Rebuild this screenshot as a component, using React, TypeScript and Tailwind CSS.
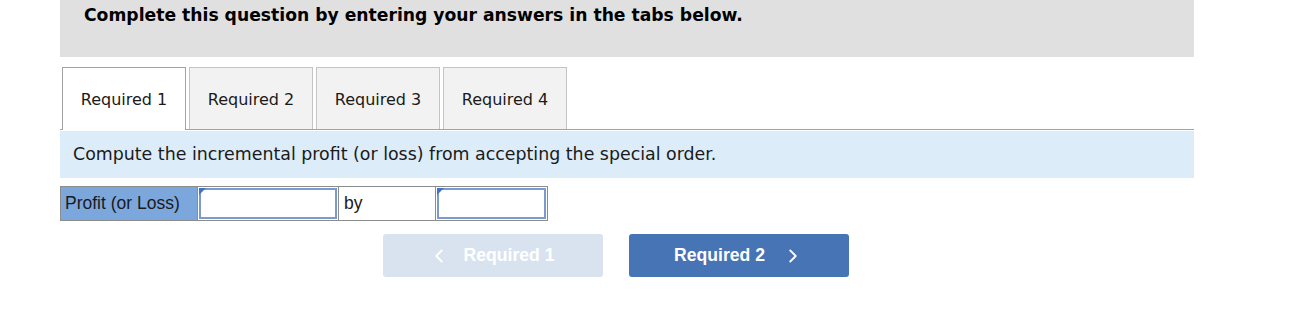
import { ChevronLeft, ChevronRight } from 'lucide-react'

const tabs = ['Required 1', 'Required 2', 'Required 3', 'Required 4']

function InputBox() {
  return (
    <div className="relative h-full w-full border-2 border-[#7b9bcc] bg-white">
      <div className="absolute -left-[2px] -top-[2px] h-0 w-0 border-r-[7px] border-t-[7px] border-r-transparent border-t-[#3f74c2]" />
    </div>
  )
}

export default function App() {
  return (
    <div className="w-[1300px] h-[318px] bg-white pl-[60px]" style={{ fontFamily: '"DejaVu Sans", Verdana, sans-serif' }}>
      <div className="w-[1134px]">
        {/* Header */}
        <div className="h-[57px] bg-[#e0e0e0] pl-[24px] pt-[4px]">
          <p className="text-[17.2px] font-bold text-black leading-[22px]">
            Complete this question by entering your answers in the tabs below.
          </p>
        </div>

        {/* Tabs */}
        <div className="mt-[10px] flex items-end border-b border-[#a3a3a3] pl-[2px]">
          {tabs.map((tab, i) =>
            i === 0 ? (
              <div
                key={tab}
                className="-mb-px flex h-[63px] w-[124px] items-center justify-center border border-b-0 border-[#a3a3a3] bg-white pt-[2px] text-[16px] text-[#1a1a1a]"
              >
                {tab}
              </div>
            ) : (
              <div
                key={tab}
                className="ml-[3px] flex h-[62px] w-[124px] items-center justify-center border border-b-0 border-[#c4c4c4] bg-[#f2f2f2] pt-[2px] text-[16px] text-[#1a1a1a]"
              >
                {tab}
              </div>
            )
          )}
        </div>

        {/* Instruction */}
        <div className="mt-px flex h-[47px] items-center bg-[#ddecf9] pl-[13px] text-[17.4px] text-[#1a1a1a]">
          Compute the incremental profit (or loss) from accepting the special order.
        </div>

        {/* Answer row */}
        <div
          className="mt-[8px] flex h-[35px] w-[488px] border border-[#8c8c8c]"
          style={{ fontFamily: '"Liberation Sans", Arial, sans-serif' }}
        >
          <div className="flex w-[137px] items-center border-r border-[#8c8c8c] bg-[#7ba7dd] pl-[4px] text-[17.5px] text-[#1a1a1a]">
            Profit (or Loss)
          </div>
          <div className="h-full w-[141px] border-r border-[#8c8c8c] p-px">
            <InputBox />
          </div>
          <div className="flex w-[97px] items-center border-r border-[#8c8c8c] pl-[5px] text-[17.5px] text-[#1a1a1a]">
            by
          </div>
          <div className="h-full flex-1 p-px">
            <InputBox />
          </div>
        </div>

        {/* Navigation */}
        <div
          className="mt-[13px] flex gap-[26px] pl-[323px]"
          style={{ fontFamily: '"Liberation Sans", Arial, sans-serif' }}
        >
          <button className="flex h-[43px] w-[220px] items-center justify-center gap-[14px] rounded-[3px] bg-[#d9e3ef] pr-[4px] text-[17.6px] font-bold text-white">
            <ChevronLeft className="h-[22px] w-[22px]" strokeWidth={2} />
            Required 1
          </button>
          <button className="flex h-[43px] w-[220px] items-center justify-center gap-[17px] rounded-[3px] bg-[#4674b4] text-[17.6px] font-bold text-white">
            Required 2
            <ChevronRight className="h-[22px] w-[22px]" strokeWidth={2} />
          </button>
        </div>
      </div>
    </div>
  )
}
